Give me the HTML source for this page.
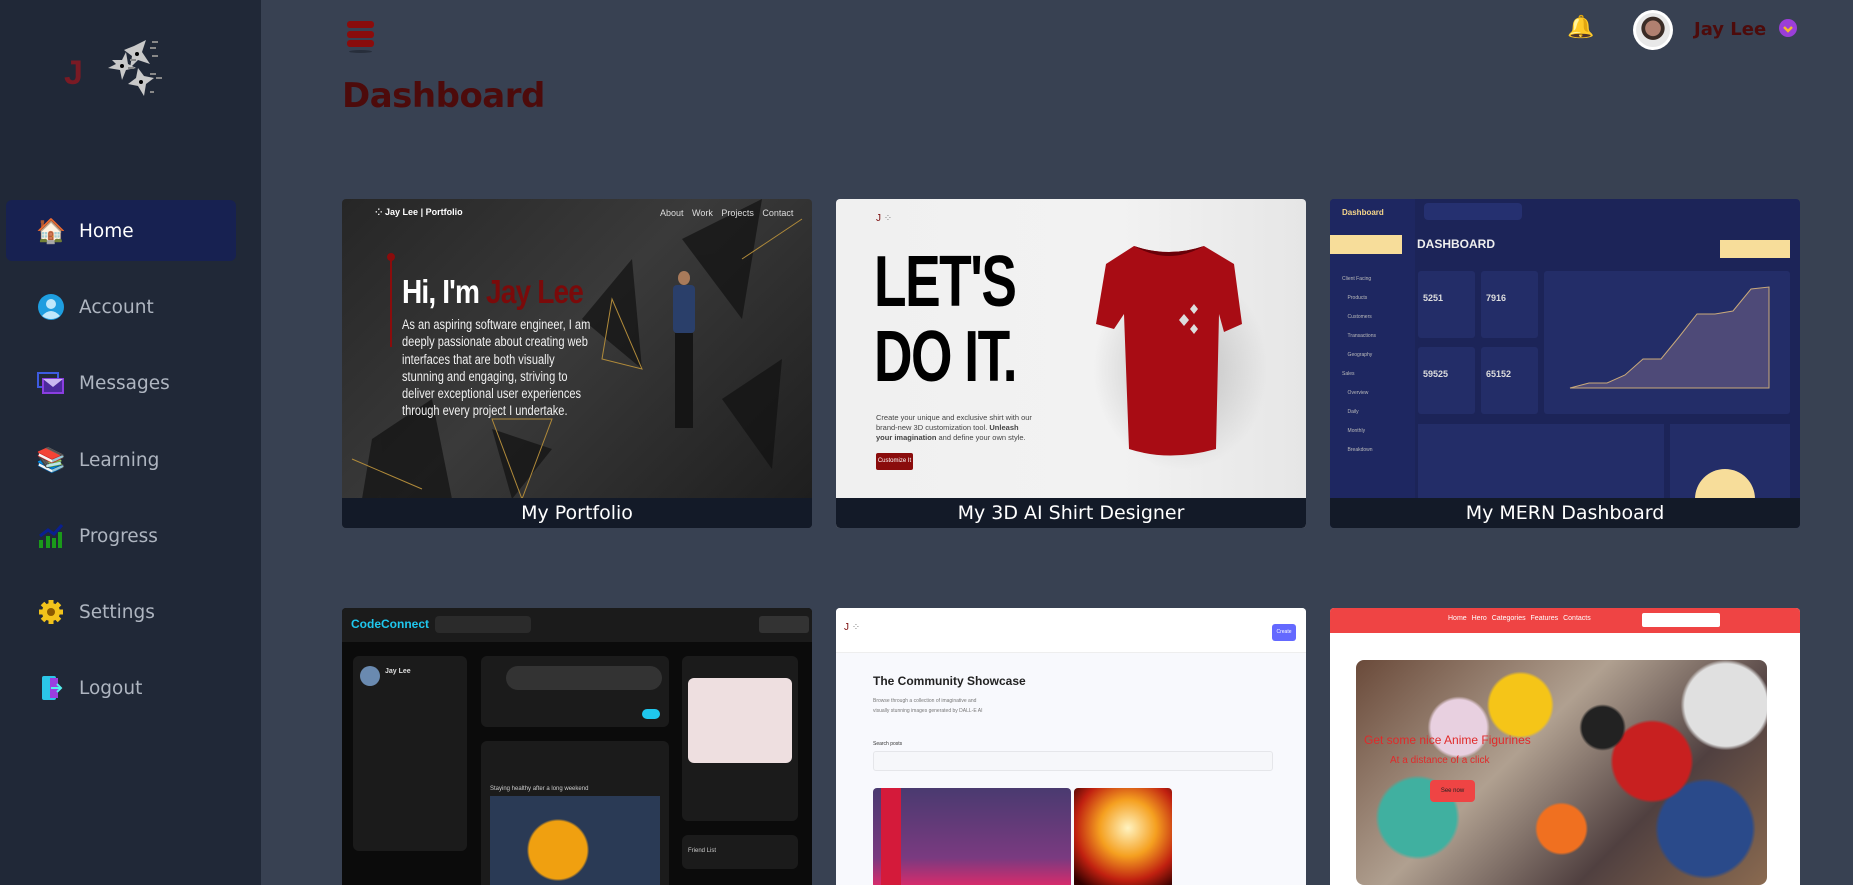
<!DOCTYPE html>
<html><head><meta charset="utf-8"><style>
*{margin:0;padding:0;box-sizing:border-box}
body{width:1853px;height:885px;overflow:hidden;background:#384152;font-family:"Liberation Sans","DejaVu Sans",sans-serif;position:relative}
.abs{position:absolute}
#side{left:0;top:0;width:261px;height:885px;background:#202837}
.nav{position:absolute;left:37px;height:40px;display:flex;align-items:center;color:#aeb5c0;font-size:18.5px;font-family:"DejaVu Sans","Liberation Sans",sans-serif}
.nav .ic{width:28px;height:28px;margin-right:14px;display:flex;align-items:center;justify-content:center;font-size:24px}
.card{position:absolute;width:470px;overflow:hidden;border-radius:4px}
.cap{position:absolute;left:0;bottom:0;width:100%;height:30px;background:#131a28;color:#fff;font-size:19px;text-align:center;line-height:30px;font-family:"DejaVu Sans","Liberation Sans",sans-serif}
.t{position:absolute;white-space:nowrap}
</style></head><body>
<div id="side" class="abs">
  <div class="abs" style="left:64px;top:54px;color:#7a1a24;font-weight:bold;font-size:34px;">J</div>
  <svg class="abs" style="left:100px;top:38px" width="75" height="66" viewBox="0 0 75 66">
    <g fill="#c9c9c9"><path d="M34 8 L46 2 L42 14 L50 26 L38 22 L30 30 L32 18 L24 12Z"/><path d="M12 22 L22 22 L26 14 L28 26 L36 30 L26 32 L22 42 L20 32 L8 30 L16 26Z"/><path d="M38 30 L44 38 L54 40 L46 46 L44 58 L38 48 L28 46 L36 40Z"/></g>
    <g fill="#000"><circle cx="37" cy="16" r="2"/><circle cx="22" cy="28" r="2"/><circle cx="41" cy="44" r="2"/></g>
    <g stroke="#888" stroke-width="2"><path d="M52 4h6M50 10h6M52 18h6M30 22h6M28 30h6M50 36h6M56 40h6M50 54h4"/></g>
  </svg>
  <div class="abs" style="left:6px;top:200px;width:230px;height:61px;background:#172151;border-radius:6px"></div>
  <div class="nav" style="top:211px;color:#fff"><span class="ic">🏠</span>Home</div>
  <div class="nav" style="top:287px"><span class="ic"><svg width="28" height="28"><circle cx="14" cy="14" r="13" fill="#1e9ee0"/><circle cx="14" cy="11" r="5" fill="#bfe8fb"/><path d="M5 23 Q14 13 23 23 Q14 29 5 23Z" fill="#bfe8fb"/></svg></span>Account</div>
  <div class="nav" style="top:363px"><span class="ic"><svg width="28" height="24"><rect x="1" y="2" width="20" height="14" fill="none" stroke="#3d5be0" stroke-width="2"/><rect x="6" y="8" width="20" height="14" fill="#4b2a9b" stroke="#8a3ee0" stroke-width="2"/><path d="M6 8 L16 16 L26 8" fill="#c9b8f0"/></svg></span>Messages</div>
  <div class="nav" style="top:440px"><span class="ic">📚</span>Learning</div>
  <div class="nav" style="top:516px"><span class="ic"><svg width="26" height="28"><path d="M2 14 L10 8 L16 12 L24 3" fill="none" stroke="#0a1f8f" stroke-width="3"/><rect x="1" y="18" width="4" height="8" fill="#1a9a1a"/><rect x="8" y="14" width="4" height="12" fill="#1a9a1a"/><rect x="14" y="16" width="4" height="10" fill="#1a9a1a"/><rect x="20" y="10" width="4" height="16" fill="#1a9a1a"/></svg></span>Progress</div>
  <div class="nav" style="top:592px"><span class="ic"><svg width="28" height="28" viewBox="0 0 28 28"><g fill="#f2c31b"><circle cx="14" cy="14" r="9"/><g stroke="#f2c31b" stroke-width="5"><path d="M14 2v24M2 14h24M5.5 5.5l17 17M22.5 5.5l-17 17"/></g></g><circle cx="14" cy="14" r="4" fill="#8a5a00"/></svg></span>Settings</div>
  <div class="nav" style="top:668px"><span class="ic"><svg width="24" height="28"><rect x="3" y="2" width="14" height="24" rx="2" fill="#2bc6e8"/><rect x="11" y="4" width="8" height="20" fill="#9b3ee0"/><path d="M12 14h10M18 10l4 4-4 4" stroke="#5ee" stroke-width="2" fill="none"/></svg></span>Logout</div>
</div>

<div class="abs" style="left:347px;top:21px;width:27px;height:7px;background:#8a0c0c;border-radius:3px"></div>
<div class="abs" style="left:347px;top:31px;width:27px;height:7px;background:#8a0c0c;border-radius:3px"></div>
<div class="abs" style="left:347px;top:40px;width:27px;height:7px;background:#8a0c0c;border-radius:3px"></div>
<div class="abs" style="left:349px;top:50px;width:23px;height:3px;background:#272e3b;border-radius:50%"></div>
<div class="t" style="left:342px;top:76px;font-size:34px;font-weight:bold;color:#4d0b0b;font-family:'DejaVu Sans','Liberation Sans',sans-serif;letter-spacing:-0.5px">Dashboard</div>

<div class="abs" style="left:1567px;top:14px;font-size:22px">🔔</div>
<div class="abs" style="left:1633px;top:10px;width:40px;height:40px;border-radius:50%;background:#fff;padding:3px"><div style="width:34px;height:34px;border-radius:50%;background:radial-gradient(circle at 50% 45%,#b08070 0 30%,#3a2c26 32% 45%,#e8e8e8 47%)"></div></div>
<div class="t" style="left:1694px;top:19px;font-size:18px;font-weight:bold;color:#4d0b0b;font-family:'DejaVu Sans','Liberation Sans',sans-serif">Jay Lee</div>
<div class="abs" style="left:1779px;top:19px;width:18px;height:18px;border-radius:50%;background:#9b3ed8"><svg width="18" height="18"><path d="M5 8l4 4 4-4" stroke="#f5b82e" stroke-width="2.5" fill="none"/></svg></div>

<div class="card" style="left:342px;top:199px;height:329px;background:linear-gradient(135deg,#262626,#3a3a3a 45%,#1c1c1c)">
  <svg class="abs" style="left:0;top:0" width="470" height="300"><g fill="#111" opacity=".7"><path d="M240 120 L290 60 L300 170Z"/><path d="M340 40 L420 0 L400 120Z"/><path d="M30 240 L90 200 L110 300 L20 300Z"/><path d="M380 200 L440 160 L430 270Z"/><path d="M150 230 L210 250 L170 300Z"/></g><g stroke="#b08a3a" fill="none" stroke-width="1"><path d="M270 100 L300 170 L260 160Z"/><path d="M10 260 L80 290 M150 220 L180 300 L210 220Z M400 60 L460 20"/></g></svg>
  <div class="t" style="left:33px;top:8px;color:#fff;font-size:9px;font-weight:bold">⁘ Jay Lee | Portfolio</div>
  <div class="t" style="left:318px;top:9px;color:#ddd;font-size:9px;word-spacing:6px">About Work Projects Contact</div>
  <div class="abs" style="left:48px;top:58px;width:2px;height:90px;background:#8a0c0c"></div>
  <div class="abs" style="left:45px;top:54px;width:8px;height:8px;border-radius:50%;background:#8a0c0c"></div>
  <div class="t" style="left:60px;top:74px;font-size:33px;font-weight:bold;color:#fff;transform:scaleX(.85);transform-origin:left;letter-spacing:-1px">Hi, I'm <span style="color:#7a0a0a">Jay Lee</span></div>
  <div class="abs" style="left:60px;top:117px;width:230px;color:#f0f0f0;font-size:13.5px;line-height:17.3px;transform:scaleX(.82);transform-origin:left;">As an aspiring software engineer, I am<br>deeply passionate about creating web<br>interfaces that are both visually<br>stunning and engaging, striving to<br>deliver exceptional user experiences<br>through every project I undertake.</div>
  <div class="abs" style="left:336px;top:72px;width:12px;height:14px;border-radius:50%;background:#a87a5a"></div>
  <div class="abs" style="left:331px;top:86px;width:22px;height:48px;background:#2a3f6a;border-radius:4px"></div>
  <div class="abs" style="left:333px;top:134px;width:18px;height:95px;background:#151515"></div>
  <div class="cap">My Portfolio</div>
</div>

<div class="card" style="left:836px;top:199px;height:329px;background:linear-gradient(90deg,#f0f0f0,#f2f2f2 60%,#e6e6e6)">
  <div class="t" style="left:40px;top:14px;font-size:10px;color:#7a0a0a">J <span style="color:#888">⁘</span></div>
  <div class="t" style="left:38px;top:46px;font-size:72px;font-weight:900;color:#000;line-height:75px;transform:scaleX(.74);transform-origin:left;letter-spacing:-2px">LET'S<br>DO IT.</div>
  <div class="abs" style="left:40px;top:214px;width:160px;color:#444;font-size:7.5px;line-height:10px">Create your unique and exclusive shirt with our brand-new 3D customization tool. <b>Unleash your imagination</b> and define your own style.</div>
  <div class="abs" style="left:40px;top:254px;width:37px;height:17px;background:#8a0c0c;color:#fff;font-size:6px;line-height:17px;text-align:center;border-radius:2px">Customize It</div>
  <div class="abs" style="left:250px;top:60px;width:190px;height:220px;border-radius:50%;background:radial-gradient(#bbb,transparent 65%)"></div>
  <svg class="abs" style="left:258px;top:45px" width="150" height="215"><path d="M40 2 Q75 14 110 2 L140 20 L148 80 L130 88 L125 70 L122 205 Q75 218 35 205 L30 70 L20 85 L2 80 L12 20Z" fill="#a80c14"/><path d="M40 2 Q75 14 110 2 Q75 22 40 2Z" fill="#6a0008"/><g fill="#ddd"><path d="M90 70l5 6-5 6-5-6z"/><path d="M100 60l4 5-4 5-4-5z"/><path d="M100 80l4 5-4 5-4-5z"/></g></svg>
  <div class="cap">My 3D AI Shirt Designer</div>
</div>

<div class="card" style="left:1330px;top:199px;height:329px;background:#1c2458">
  <div class="abs" style="left:0;top:0;width:85px;height:300px;background:#1e2761"></div>
  <div class="t" style="left:12px;top:9px;color:#f5d58a;font-size:8px;font-weight:bold">Dashboard</div>
  <div class="abs" style="left:0;top:36px;width:72px;height:19px;background:#f7dd9a"></div>
  <div class="t" style="left:12px;top:71px;color:#bbb;font-size:5px;line-height:19px">Client Facing<br>&nbsp;&nbsp;&nbsp;&nbsp;Products<br>&nbsp;&nbsp;&nbsp;&nbsp;Customers<br>&nbsp;&nbsp;&nbsp;&nbsp;Transactions<br>&nbsp;&nbsp;&nbsp;&nbsp;Geography<br>Sales<br>&nbsp;&nbsp;&nbsp;&nbsp;Overview<br>&nbsp;&nbsp;&nbsp;&nbsp;Daily<br>&nbsp;&nbsp;&nbsp;&nbsp;Monthly<br>&nbsp;&nbsp;&nbsp;&nbsp;Breakdown</div>
  <div class="abs" style="left:94px;top:4px;width:98px;height:17px;background:#253070;border-radius:4px"></div>
  <div class="t" style="left:87px;top:38px;color:#eee;font-size:12px;font-weight:bold">DASHBOARD</div>
  <div class="abs" style="left:390px;top:41px;width:70px;height:18px;background:#f7dd9a"></div>
  <div class="abs" style="left:88px;top:72px;width:57px;height:67px;background:#232d68;border-radius:3px"></div>
  <div class="abs" style="left:151px;top:72px;width:57px;height:67px;background:#232d68;border-radius:3px"></div>
  <div class="abs" style="left:88px;top:148px;width:57px;height:67px;background:#232d68;border-radius:3px"></div>
  <div class="abs" style="left:151px;top:148px;width:57px;height:67px;background:#232d68;border-radius:3px"></div>
  <div class="t" style="left:93px;top:94px;color:#ddd;font-size:9px;font-weight:bold">5251</div>
  <div class="t" style="left:156px;top:94px;color:#ddd;font-size:9px;font-weight:bold">7916</div>
  <div class="t" style="left:93px;top:170px;color:#ddd;font-size:9px;font-weight:bold">59525</div>
  <div class="t" style="left:156px;top:170px;color:#ddd;font-size:9px;font-weight:bold">65152</div>
  <div class="abs" style="left:214px;top:72px;width:246px;height:143px;background:#232d68;border-radius:3px"></div>
  <svg class="abs" style="left:214px;top:72px" width="246" height="143"><path d="M26 117 L45 112 L63 112 L81 104 L99 88 L117 88 L135 66 L153 43 L171 43 L189 40 L207 18 L225 16 L225 117Z" fill="#4e4a78" stroke="#c9a97a"/></svg>
  <div class="abs" style="left:88px;top:225px;width:246px;height:80px;background:#232d68"></div>
  <div class="abs" style="left:340px;top:225px;width:120px;height:80px;background:#232d68"></div>
  <div class="abs" style="left:365px;top:270px;width:60px;height:60px;border-radius:50%;background:#f7dd9a"></div>
  <div class="cap">My MERN Dashboard</div>
</div>

<div class="card" style="left:342px;top:608px;height:277px;background:#0b0b0b;border-radius:4px 4px 0 0">
  <div class="abs" style="left:0;top:0;width:470px;height:34px;background:#1b1b1b"></div>
  <div class="t" style="left:9px;top:9px;color:#1fc7ee;font-size:12px;font-weight:bold">CodeConnect</div>
  <div class="abs" style="left:93px;top:8px;width:96px;height:17px;background:#2b2b2b;border-radius:4px"></div>
  <div class="abs" style="left:417px;top:8px;width:50px;height:17px;background:#333;border-radius:3px"></div>
  <div class="abs" style="left:11px;top:48px;width:114px;height:195px;background:#1b1b1b;border-radius:6px"></div>
  <div class="t" style="left:43px;top:60px;color:#ddd;font-size:7px;font-weight:bold">Jay Lee</div>
  <div class="abs" style="left:18px;top:58px;width:20px;height:20px;border-radius:50%;background:#6a8ab0"></div>
  <div class="abs" style="left:139px;top:48px;width:188px;height:71px;background:#1b1b1b;border-radius:6px"></div>
  <div class="abs" style="left:164px;top:58px;width:156px;height:24px;background:#333;border-radius:12px"></div>
  <div class="abs" style="left:300px;top:101px;width:18px;height:10px;background:#1fc7ee;border-radius:6px"></div>
  <div class="abs" style="left:139px;top:133px;width:188px;height:150px;background:#1b1b1b;border-radius:6px"></div>
  <div class="t" style="left:148px;top:178px;color:#ccc;font-size:6px">Staying healthy after a long weekend</div>
  <div class="abs" style="left:148px;top:188px;width:170px;height:90px;background:radial-gradient(circle at 40% 60%,#f0a010 0 25%,#2a3a55 27%)"></div>
  <div class="abs" style="left:340px;top:48px;width:116px;height:165px;background:#1b1b1b;border-radius:6px"></div>
  <div class="abs" style="left:346px;top:70px;width:104px;height:85px;background:#eedfe0;border-radius:6px"></div>
  <div class="abs" style="left:340px;top:227px;width:116px;height:34px;background:#1b1b1b;border-radius:6px"></div>
  <div class="t" style="left:346px;top:240px;color:#ccc;font-size:6px">Friend List</div>
</div>

<div class="card" style="left:836px;top:608px;height:277px;background:#f8f9fd;border-radius:4px 4px 0 0">
  <div class="abs" style="left:0;top:0;width:470px;height:45px;background:#fff;border-bottom:1px solid #eee"></div>
  <div class="t" style="left:8px;top:14px;color:#7a0a0a;font-size:10px">J <span style="color:#888">⁘</span></div>
  <div class="abs" style="left:436px;top:16px;width:24px;height:17px;background:#6469ff;border-radius:3px;color:#fff;font-size:5px;line-height:17px;text-align:center">Create</div>
  <div class="t" style="left:37px;top:66px;color:#222;font-size:12px;font-weight:bold">The Community Showcase</div>
  <div class="abs" style="left:37px;top:88px;width:120px;color:#777;font-size:5px;line-height:10px">Browse through a collection of imaginative and visually stunning images generated by DALL-E AI</div>
  <div class="t" style="left:37px;top:133px;color:#333;font-size:5px">Search posts</div>
  <div class="abs" style="left:37px;top:143px;width:400px;height:20px;background:#f6f7fa;border:1px solid #e5e6ea;border-radius:3px"></div>
  <div class="abs" style="left:37px;top:180px;width:198px;height:100px;background:linear-gradient(180deg,#4a3a70,#7a3a80 70%,#e02a6a);border-radius:4px"></div>
  <div class="abs" style="left:45px;top:180px;width:20px;height:100px;background:#d41a3a"></div>
  <div class="abs" style="left:238px;top:180px;width:98px;height:100px;background:radial-gradient(circle at 55% 40%,#fff3c0,#f5a020 35%,#c02010 65%,#300 90%);border-radius:4px"></div>
</div>

<div class="card" style="left:1330px;top:608px;height:277px;background:#fff;border-radius:4px 4px 0 0">
  <div class="abs" style="left:0;top:0;width:470px;height:25px;background:#ef4444"></div>
  <div class="t" style="left:118px;top:7px;color:#fff;font-size:7px;word-spacing:3px">Home Hero Categories Features Contacts</div>
  <div class="abs" style="left:312px;top:5px;width:78px;height:14px;background:#fff;border-radius:2px"></div>
  <div class="abs" style="left:26px;top:52px;width:411px;height:225px;border-radius:8px;background:
   radial-gradient(circle at 25% 30%,#e8d0e0 0 8%,transparent 9%),
   radial-gradient(circle at 40% 20%,#f5c518 0 10%,transparent 11%),
   radial-gradient(circle at 60% 30%,#222 0 7%,transparent 8%),
   radial-gradient(circle at 72% 45%,#c82020 0 12%,transparent 13%),
   radial-gradient(circle at 15% 70%,#40b0a0 0 10%,transparent 11%),
   radial-gradient(circle at 50% 75%,#f07020 0 9%,transparent 10%),
   radial-gradient(circle at 85% 75%,#2a4a8a 0 12%,transparent 13%),
   radial-gradient(circle at 90% 20%,#e0e0e0 0 10%,transparent 11%),
   linear-gradient(135deg,#6a4a3a,#b0a090 40%,#504040 70%,#8a6a50)"></div>
  <div class="t" style="left:34px;top:125px;color:#e02a2a;font-size:12px">Get some nice Anime Figurines</div>
  <div class="t" style="left:60px;top:147px;color:#e02a2a;font-size:10px">At a distance of a click</div>
  <div class="abs" style="left:100px;top:172px;width:45px;height:22px;background:#ef4444;border-radius:4px;color:#222;font-size:6px;line-height:22px;text-align:center">See now</div>
</div>
</body></html>
